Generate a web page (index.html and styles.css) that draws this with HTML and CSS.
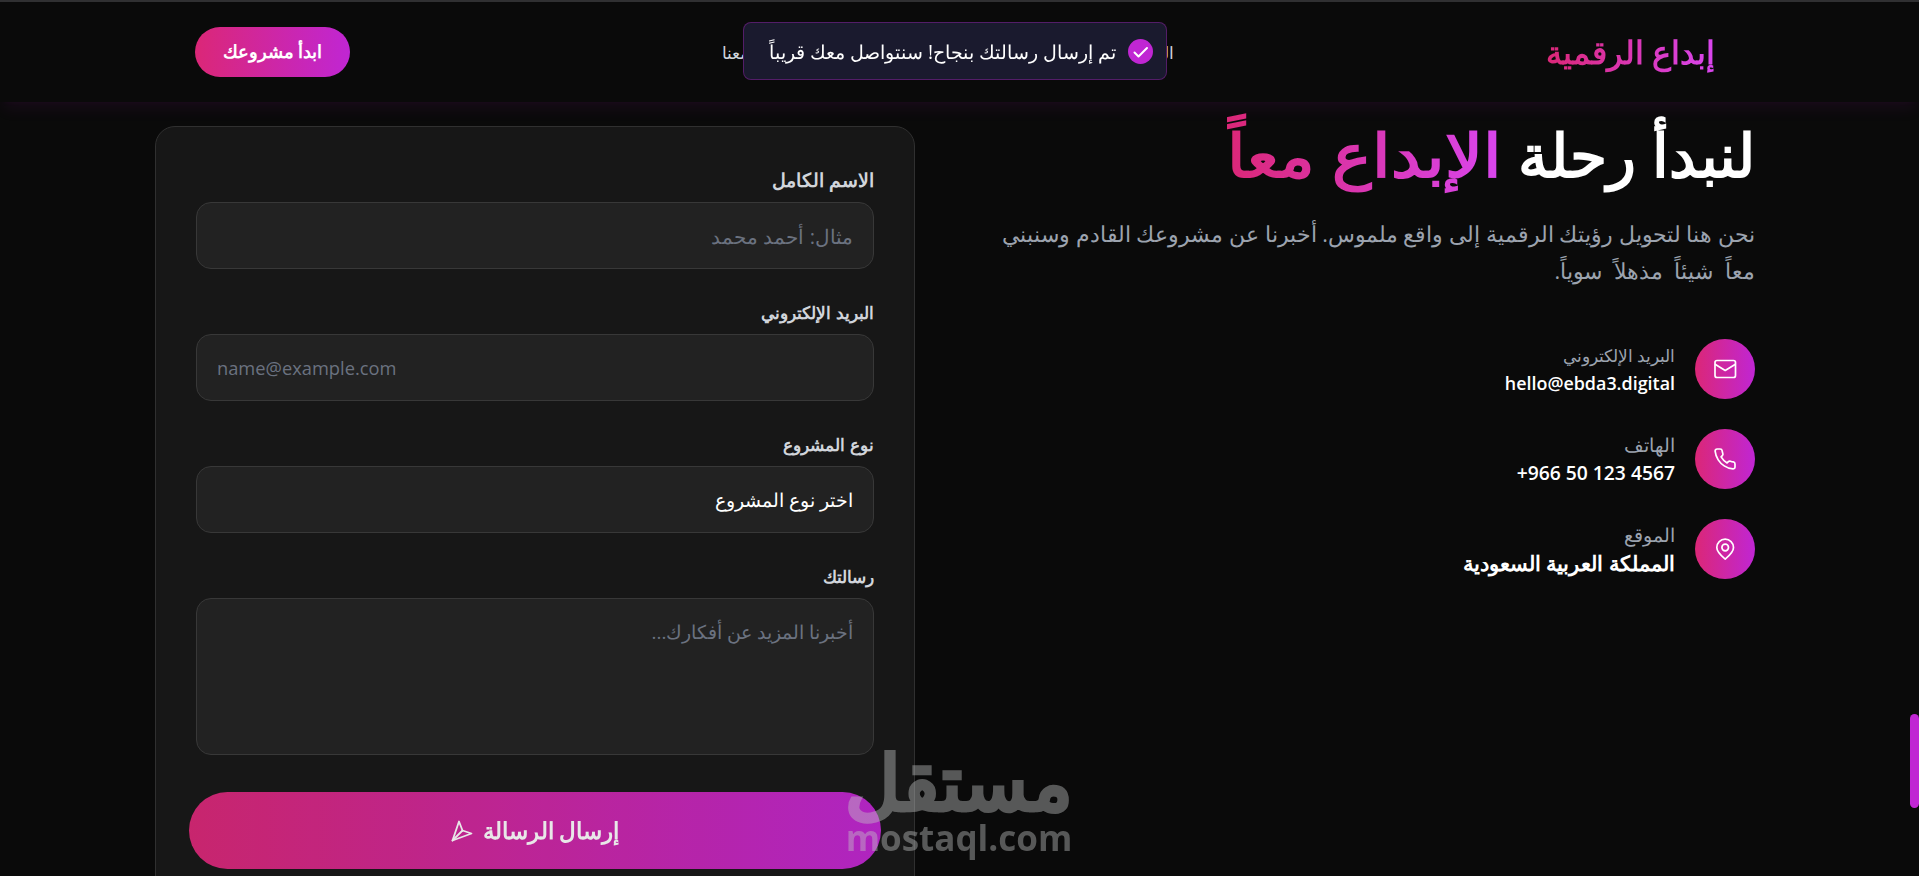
FILE: index.html
```html
<!DOCTYPE html>
<html lang="ar" dir="rtl">
<head>
    <meta charset="UTF-8">
    <meta name="viewport" content="width=device-width, initial-scale=1.0">
    <title>إبداع الرقمية</title>
    <link rel="stylesheet" href="styles.css">
</head>
<body>
    <header class="navbar">
        <div class="nav-container">
            <a class="logo gradient-text">إبداع الرقمية</a>
            <nav class="nav-links">
                <a>الرئيسية</a>
                <a>تواصل معنا</a>
            </nav>
            <a class="nav-cta">ابدأ مشروعك</a>
        </div>
    </header>

    <main class="contact">
        <section class="contact-info">
            <h1><span>لنبدأ رحلة</span> <span class="gradient-text accent">الإبداع معاً</span></h1>
            <p class="lead">نحن هنا لتحويل رؤيتك الرقمية إلى واقع ملموس. أخبرنا عن مشروعك القادم وسنبني<br><span class="lead-end">معاً شيئاً مذهلاً سوياً.</span></p>
            <ul class="info-list">
                <li>
                    <span class="info-icon">
                        <svg viewBox="0 0 24 24"><rect x="2" y="3.5" width="20.5" height="17" rx="2"/><path d="M2.5 7.5 12.2 13.5 22 7.5"/></svg>
                    </span>
                    <div>
                        <span class="info-label">البريد الإلكتروني</span>
                        <strong class="email" dir="ltr">hello@ebda3.digital</strong>
                    </div>
                </li>
                <li>
                    <span class="info-icon">
                        <svg viewBox="0 0 24 24"><path d="M22 16.92v3a2 2 0 0 1-2.18 2 19.79 19.79 0 0 1-8.63-3.07 19.5 19.5 0 0 1-6-6 19.79 19.79 0 0 1-3.07-8.67A2 2 0 0 1 4.11 2h3a2 2 0 0 1 2 1.72 12.84 12.84 0 0 0 .7 2.81 2 2 0 0 1-.45 2.11L8.09 9.91a16 16 0 0 0 6 6l1.27-1.27a2 2 0 0 1 2.11-.45 12.84 12.84 0 0 0 2.81.7A2 2 0 0 1 22 16.92z"/></svg>
                    </span>
                    <div>
                        <span class="info-label tall">الهاتف</span>
                        <strong class="phone" dir="ltr">+966 50 123 4567</strong>
                    </div>
                </li>
                <li>
                    <span class="info-icon">
                        <svg viewBox="0 0 24 24"><path d="M20.5 10.5c0 5-6 9.500-8.300 11.500C10 20 3.800 15.500 3.800 10.500a8.350 8.350 0 0 1 16.700 0Z"/><circle cx="12.200" cy="10.500" r="3.300"/></svg>
                    </span>
                    <div>
                        <span class="info-label tall">الموقع</span>
                        <strong class="place">المملكة العربية السعودية</strong>
                    </div>
                </li>
            </ul>
        </section>

        <form class="contact-form">
            <div class="field">
                <label for="name" class="wide">الاسم الكامل</label>
                <input id="name" class="name-input" type="text" placeholder="مثال: أحمد محمد">
            </div>
            <div class="field">
                <label for="email">البريد الإلكتروني</label>
                <input id="email" type="email" dir="ltr" placeholder="name@example.com">
            </div>
            <div class="field">
                <label for="type">نوع المشروع</label>
                <select id="type">
                    <option>اختر نوع المشروع</option>
                </select>
            </div>
            <div class="field">
                <label for="message">رسالتك</label>
                <textarea id="message" placeholder="أخبرنا المزيد عن أفكارك..."></textarea>
            </div>
            <button type="button" class="submit">
                <span>إرسال الرسالة</span>
                <svg viewBox="0 0 22 22"><path d="M8 1.500 11.500 10.500 20.500 13.500 1.500 20.500z"/><path d="M1.500 20.500 11.500 10.500"/></svg>
            </button>
        </form>
    </main>

    <div class="toast">
        <svg viewBox="0 0 25 25"><circle cx="12.5" cy="12.5" r="12.5"/><path d="m6.500 13.500 4 4 8.500-8.500"/></svg>
        <span>تم إرسال رسالتك بنجاح! سنتواصل معك قريباً</span>
    </div>

    <div class="watermark">
        <span class="mark-ar">مستقل</span>
        <span class="mark-en" dir="ltr">mostaql.com</span>
    </div>
    <div class="scroll-thumb"></div>
</body>
</html>
```
FILE: styles.css
```css
* {
    margin: 0;
    padding: 0;
    box-sizing: border-box;
}
body {
    height: 876px;
    overflow: hidden;
    background-color: #0a0a0a;
    color: #fff;
    font-family: "Open Sans", sans-serif;
}
svg {
    fill: none;
    stroke: #fff;
    stroke-linecap: round;
    stroke-linejoin: round;
}
.gradient-text {
    background: linear-gradient(to left, #d946ef, #db2777);
    -webkit-background-clip: text;
    background-clip: text;
    color: transparent;
}

/* navbar */
.navbar {
    height: 102px;
    padding-right: 9px;
    border-top: 2px solid #303032;
    box-shadow: 0 10px 15px -3px rgba(192, 38, 211, 0.07), 0 4px 6px -4px rgba(192, 38, 211, 0.05);
}
.nav-container {
    width: 1600px;
    height: 100%;
    margin: 0 auto;
    padding: 0 40px;
    display: flex;
    align-items: center;
    justify-content: space-between;
}
.logo {
    font-size: 31.7px;
    font-weight: 700;
    line-height: 50px;
}
.nav-links {
    width: 452px;
    display: flex;
    justify-content: space-between;
    color: #d1d5db;
    font-size: 17px;
}
.nav-cta {
    width: 155px;
    height: 50px;
    border-radius: 25px;
    background: linear-gradient(to left, #c026d3, #db2777);
    font-size: 17.6px;
    font-weight: 600;
    line-height: 48px;
    text-align: center;
}

/* contact section */
.contact {
    width: 1600px;
    height: 774px;
    margin: 0 164px 0 auto;
    padding-top: 24px;
    display: grid;
    grid-template-columns: 1fr 1fr;
    grid-template-rows: 750px;
    gap: 80px;
    overflow: hidden;
}
.contact-info {
    margin-top: -5px;
}
h1 {
    display: flex;
    gap: 17px;
    font-size: 60px;
    line-height: 67px;
    white-space: nowrap;
}
.accent {
    margin: -10px 0;
    padding: 10px 0;
    transform: scaleX(1.11);
    transform-origin: right;
}
.lead {
    margin-top: 27px;
    color: #9ca3af;
    font-size: 21.5px;
    line-height: 37.4px;
    white-space: nowrap;
}
.lead-end {
    word-spacing: 6px;
}
.info-list {
    margin-top: 49.2px;
    list-style: none;
    display: flex;
    flex-direction: column;
    gap: 30px;
}
.info-list li {
    display: flex;
    align-items: center;
    gap: 20px;
    height: 60px;
}
.info-list li div {
    display: flex;
    flex-direction: column;
    align-items: flex-start;
}
.info-icon {
    width: 60px;
    height: 60px;
    border-radius: 50%;
    background: linear-gradient(to left, #c026d3, #db2777);
    display: flex;
    align-items: center;
    justify-content: center;
}
.info-icon svg {
    width: 24px;
    height: 24px;
    stroke-width: 1.7;
}
.info-label {
    color: #9ca3af;
    font-size: 17px;
    line-height: 27px;
}
.tall {
    font-size: 19px;
}
.info-list strong {
    font-weight: 600;
    line-height: 28px;
}
.email {
    font-size: 17.9px;
}
.phone {
    font-size: 19.3px;
}
.place {
    font-size: 21.3px;
}

/* form card */
.contact-form {
    height: 830px;
    padding: 40px;
    border: 1px solid #303030;
    border-radius: 20px;
    background-color: #171717;
}
.field {
    margin-bottom: 30px;
}
label {
    display: block;
    height: 35px;
    color: #d1d5db;
    font-size: 17.4px;
    font-weight: 600;
    line-height: 26px;
}
.wide {
    font-size: 18.6px;
}
input, select, textarea {
    display: block;
    width: 100%;
    height: 67px;
    padding: 0 20px;
    border: 1px solid #383838;
    border-radius: 15px;
    background-color: #222;
    color: #fff;
    font-family: inherit;
    font-size: 18.3px;
    appearance: none;
    outline: none;
}
select {
    font-size: 18.8px;
}
.name-input {
    font-size: 20.2px;
}
textarea {
    height: 157px;
    padding-top: 20px;
    font-size: 18.8px;
    resize: none;
}
::placeholder {
    color: #6b7280;
    opacity: 1;
}
.submit {
    width: 692px;
    height: 77px;
    margin: 37px -7px 0;
    border: none;
    border-radius: 39px;
    background: linear-gradient(to left, #c026d3, #db2777);
    opacity: 0.9;
    color: #fff;
    font-family: inherit;
    font-size: 22.9px;
    font-weight: 700;
    display: flex;
    align-items: center;
    justify-content: center;
    gap: 10px;
}
.submit svg {
    width: 22px;
    height: 22px;
    stroke-width: 1.8;
}

/* toast */
.toast {
    position: fixed;
    top: 22px;
    left: 743px;
    width: 424px;
    height: 58px;
    padding: 0 13px;
    border: 1px solid rgba(192, 38, 211, 0.35);
    border-radius: 8px;
    background-color: #1a1a2e;
    display: flex;
    align-items: center;
    gap: 12px;
    font-size: 19.2px;
    white-space: nowrap;
}
.toast svg {
    width: 25px;
    height: 25px;
    flex: none;
    stroke-width: 2;
}
.toast circle {
    fill: #c026d3;
    stroke: none;
}

.watermark {
    position: fixed;
    top: 743px;
    left: 845px;
    width: 228px;
    display: flex;
    flex-direction: column;
    align-items: center;
    color: #c4c6c6;
    opacity: 0.42;
    font-weight: 700;
    white-space: nowrap;
}
.mark-ar {
    font-size: 76px;
    line-height: 76px;
    -webkit-text-stroke: 2px #c4c6c6;
}
.mark-en {
    font-size: 35px;
    line-height: 38px;
}
.scroll-thumb {
    position: fixed;
    top: 714px;
    right: 0;
    width: 9px;
    height: 94px;
    border-radius: 5px;
    background-color: #c026d3;
}
```
